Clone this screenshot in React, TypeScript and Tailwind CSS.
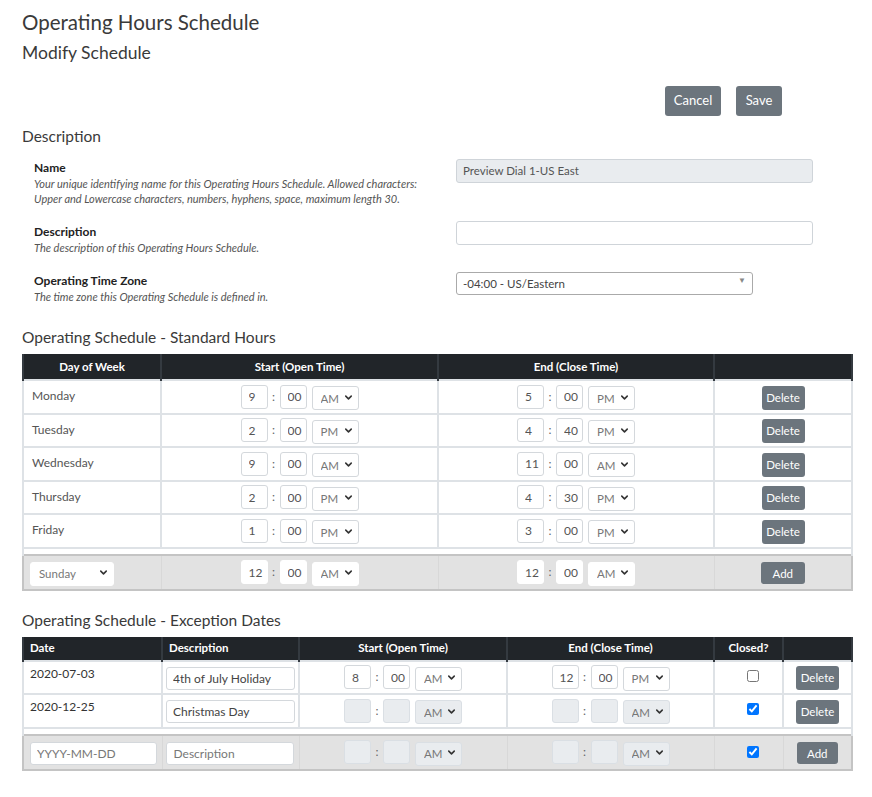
import { ChevronDown } from 'lucide-react'

interface Hours {
    day: string
    start: [string, string, string]
    end: [string, string, string]
}

interface ExceptionDay {
    date: string
    description: string
    start: [string, string, string]
    end: [string, string, string]
    closed: boolean
}

const standardHours: Hours[] = [
    { day: 'Monday', start: ['9', '00', 'AM'], end: ['5', '00', 'PM'] },
    { day: 'Tuesday', start: ['2', '00', 'PM'], end: ['4', '40', 'PM'] },
    { day: 'Wednesday', start: ['9', '00', 'AM'], end: ['11', '00', 'AM'] },
    { day: 'Thursday', start: ['2', '00', 'PM'], end: ['4', '30', 'PM'] },
    { day: 'Friday', start: ['1', '00', 'PM'], end: ['3', '00', 'PM'] },
]

const exceptionDates: ExceptionDay[] = [
    { date: '2020-07-03', description: '4th of July Holiday', start: ['8', '00', 'AM'], end: ['12', '00', 'PM'], closed: false },
    { date: '2020-12-25', description: 'Christmas Day', start: ['', '', 'AM'], end: ['', '', 'AM'], closed: true },
]

type Look = 'normal' | 'disabled' | 'plain'

const boxLook = (look: Look) =>
    look === 'disabled'
        ? 'bg-[#e9ecef] border-[#dadfe4]'
        : look === 'plain'
            ? 'bg-white border-white'
            : 'bg-white border-[#d4d8dc]'

const SmallInput = ({ value, look = 'normal', className = '' }: { value: string, look?: Look, className?: string }) => (
    <input
        readOnly
        value={value}
        className={`h-[24px] rounded-[3px] border pl-[7px] text-[12px] text-[#555] outline-none ${boxLook(look)} ${className}`}
    />
)

const DropSelect = ({ value, options, look = 'normal', className = '' }: { value: string, options: string[], look?: Look, className?: string }) => (
    <div className={`relative h-[24px] ${className}`}>
        <select
            value={value}
            onChange={() => { }}
            className={`h-full w-full appearance-none rounded-[3px] border pl-[8px] text-[11.5px] text-[#777] outline-none ${boxLook(look)}`}
        >
            {options.map((o) => <option key={o}>{o}</option>)}
        </select>
        <ChevronDown size={11} strokeWidth={3.4} className="pointer-events-none absolute right-[5px] top-[7px] text-[#333]" />
    </div>
)

const TimeGroup = ({ time, look = 'normal', ampmLook }: { time: [string, string, string], look?: Look, ampmLook?: Look }) => (
    <div className="flex items-center justify-center">
        <SmallInput value={time[0]} look={look} className="w-[27px]" />
        <span className="w-[12px] text-center text-[12px] text-[#666]">:</span>
        <SmallInput value={time[1]} look={look} className="w-[27px]" />
        <DropSelect value={time[2]} options={['AM', 'PM']} look={ampmLook ?? look} className="ml-[5px] w-[47px]" />
    </div>
)

const GrayButton = ({ label, className = '' }: { label: string, className?: string }) => (
    <button className={`rounded-[3px] bg-[#6c757d] text-white ${className}`}>{label}</button>
)

const FieldRow = ({ label, help, children }: { label: string, help: string[], children: React.ReactNode }) => (
    <div className="flex">
        <div className="ml-[12px] w-[422px] pb-[17px] pt-[1px]">
            <div className="text-[12px] font-bold leading-[16px] text-[#222]">{label}</div>
            {help.map((line) => (
                <div key={line} className="text-[11px] italic leading-[15px] text-[#555]">{line}</div>
            ))}
        </div>
        <div className="-mt-[2px]">{children}</div>
    </div>
)

const Check = ({ checked }: { checked: boolean }) => (
    <div className="flex justify-center pl-[8px]">
        <input type="checkbox" readOnly checked={checked} className="m-0 block h-[12px] w-[12px] accent-[#0075ff]" />
    </div>
)

const th = 'border-x-2 border-[#343a40] bg-[#212529] px-[6px] text-[11.5px] font-bold text-white'
const border = 'border-2 border-[#dee2e6]'
const td = `h-[33.5px] ${border} px-[8px]`
const addTd = 'h-[35px] border-y-2 border-x border-y-[#c4c4c4] border-x-[#d8d8d8] bg-[#e2e2e2] px-[6px]'

const StandardHoursTable = () => (
    <table className="w-[829px] table-fixed border-collapse">
        <colgroup>
            <col className="w-[138px]" />
            <col className="w-[277px]" />
            <col className="w-[276px]" />
            <col className="w-[138px]" />
        </colgroup>
        <thead>
            <tr className="h-[26px]">
                <th className={th}>Day of Week</th>
                <th className={th}>Start (Open Time)</th>
                <th className={th}>End (Close Time)</th>
                <th className={th}></th>
            </tr>
        </thead>
        <tbody>
            {standardHours.map((h) => (
                <tr key={h.day}>
                    <td className={`${td} align-top pt-[6px] text-[12px] text-[#555]`}>{h.day}</td>
                    <td className={td}><TimeGroup time={h.start} /></td>
                    <td className={td}><TimeGroup time={h.end} /></td>
                    <td className={`${td} text-center`}>
                        <GrayButton label="Delete" className="h-[24px] w-[43px] text-[11.5px]" />
                    </td>
                </tr>
            ))}
            <tr>
                <td colSpan={4} className="h-[7px] border-x-2 border-[#dee2e6] p-0"></td>
            </tr>
            <tr>
                <td className={`${addTd} border-l-2 border-l-[#c4c4c4]`}>
                    <DropSelect value="Sunday" options={['Sunday', 'Monday', 'Tuesday', 'Wednesday', 'Thursday', 'Friday', 'Saturday']} look="plain" className="w-[84px]" />
                </td>
                <td className={addTd}><TimeGroup time={['12', '00', 'AM']} look="plain" /></td>
                <td className={addTd}><TimeGroup time={['12', '00', 'AM']} look="plain" /></td>
                <td className={`${addTd} border-r-2 border-r-[#c4c4c4] text-center`}>
                    <GrayButton label="Add" className="h-[22px] w-[44px] text-[11.5px]" />
                </td>
            </tr>
        </tbody>
    </table>
)

const ExceptionDatesTable = () => (
    <table className="w-[829px] table-fixed border-collapse">
        <colgroup>
            <col className="w-[139px]" />
            <col className="w-[137px]" />
            <col className="w-[208px]" />
            <col className="w-[207px]" />
            <col className="w-[69px]" />
            <col className="w-[69px]" />
        </colgroup>
        <thead>
            <tr className="h-[24px]">
                <th className={`${th} text-left`}>Date</th>
                <th className={`${th} text-left`}>Description</th>
                <th className={th}>Start (Open Time)</th>
                <th className={th}>End (Close Time)</th>
                <th className={th}>Closed?</th>
                <th className={th}></th>
            </tr>
        </thead>
        <tbody>
            {exceptionDates.map((e) => (
                <tr key={e.date}>
                    <td className={`h-[33.5px] ${border} px-[6px] align-top pt-[3px] text-[12px] text-[#333]`}>{e.date}</td>
                    <td className={`h-[33.5px] ${border} px-[3px]`}>
                        <input readOnly value={e.description} className="h-[23px] w-[129px] rounded-[3px] border border-[#d4d8dc] bg-white pl-[6px] text-[12px] text-[#444] outline-none" />
                    </td>
                    <td className={td}><TimeGroup time={e.start} look={e.closed ? 'disabled' : 'normal'} /></td>
                    <td className={td}><TimeGroup time={e.end} look={e.closed ? 'disabled' : 'normal'} /></td>
                    <td className={`${td} align-top pt-[8px]`}><Check checked={e.closed} /></td>
                    <td className={`${td} text-center`}>
                        <GrayButton label="Delete" className="h-[24px] w-[43px] text-[11.5px]" />
                    </td>
                </tr>
            ))}
            <tr>
                <td colSpan={6} className="h-[7px] border-x-2 border-[#dee2e6] p-0"></td>
            </tr>
            <tr>
                <td className={`${addTd} border-l-2 border-l-[#c4c4c4]`}>
                    <input readOnly placeholder="YYYY-MM-DD" className="h-[23px] w-[127px] rounded-[3px] border border-[#d4d8dc] bg-white pl-[6px] text-[12px] placeholder:text-[#777] outline-none" />
                </td>
                <td className={`h-[35px] border-y-2 border-x border-y-[#c4c4c4] border-x-[#d8d8d8] bg-[#e2e2e2] px-[3px]`}>
                    <input readOnly placeholder="Description" className="h-[23px] w-[128px] rounded-[3px] border border-[#d4d8dc] bg-white pl-[7px] text-[12px] placeholder:text-[#777] outline-none" />
                </td>
                <td className={addTd}><TimeGroup time={['', '', 'AM']} look="disabled" /></td>
                <td className={addTd}><TimeGroup time={['', '', 'AM']} look="disabled" /></td>
                <td className={addTd}><Check checked /></td>
                <td className={`${addTd} border-r-2 border-r-[#c4c4c4] text-center`}>
                    <GrayButton label="Add" className="h-[22px] w-[41px] text-[11.5px]" />
                </td>
            </tr>
        </tbody>
    </table>
)

export default function App() {
    return (
        <div className="min-h-[797px] bg-white px-[22px] pt-[9px] font-['Lato','Liberation_Sans',sans-serif] text-[#333]">
            <h1 className="text-[20.5px] leading-[26px] text-[#3a3a3a]">Operating Hours Schedule</h1>
            <h2 className="mt-[7px] text-[17.5px] leading-[22px] text-[#3a3a3a]">Modify Schedule</h2>

            <div className="mt-[22px] flex w-[829px] justify-end gap-[15px] pr-[69px]">
                <GrayButton label="Cancel" className="h-[30px] w-[56px] text-[13px]" />
                <GrayButton label="Save" className="h-[30px] w-[46px] text-[13px]" />
            </div>

            <h3 className="mt-[10px] text-[15.5px] leading-[20px] text-[#3a3a3a]">Description</h3>

            <div className="mt-[13px]">
                <FieldRow
                    label="Name"
                    help={[
                        'Your unique identifying name for this Operating Hours Schedule. Allowed characters:',
                        'Upper and Lowercase characters, numbers, hyphens, space, maximum length 30.',
                    ]}
                >
                    <input readOnly value="Preview Dial 1-US East" className="h-[24px] w-[357px] rounded-[3px] border border-[#cfd4d9] bg-[#e9ecef] pl-[6px] text-[11.5px] text-[#555] outline-none" />
                </FieldRow>
                <FieldRow label="Description" help={['The description of this Operating Hours Schedule.']}>
                    <input readOnly value="" className="h-[24px] w-[357px] rounded-[3px] border border-[#cfd4d9] bg-white outline-none" />
                </FieldRow>
                <FieldRow label="Operating Time Zone" help={['The time zone this Operating Schedule is defined in.']}>
                    <div className="relative h-[23px] w-[297px]">
                        <select value="-04:00 - US/Eastern" onChange={() => { }} className="h-full w-full appearance-none rounded-[3px] border border-[#aaa] bg-white pl-[6px] text-[11.5px] text-[#444] outline-none">
                            <option>-04:00 - US/Eastern</option>
                        </select>
                        <span className="pointer-events-none absolute right-[7px] top-[4px] text-[8px] text-[#888]">▼</span>
                    </div>
                </FieldRow>
            </div>

            <h3 className="mt-[6px] text-[15.5px] leading-[20px] text-[#3a3a3a]">Operating Schedule - Standard Hours</h3>
            <div className="mt-[7px]">
                <StandardHoursTable />
            </div>

            <h3 className="mt-[19px] text-[15.5px] leading-[20px] text-[#3a3a3a]">Operating Schedule - Exception Dates</h3>
            <div className="mt-[7px]">
                <ExceptionDatesTable />
            </div>
        </div>
    )
}
